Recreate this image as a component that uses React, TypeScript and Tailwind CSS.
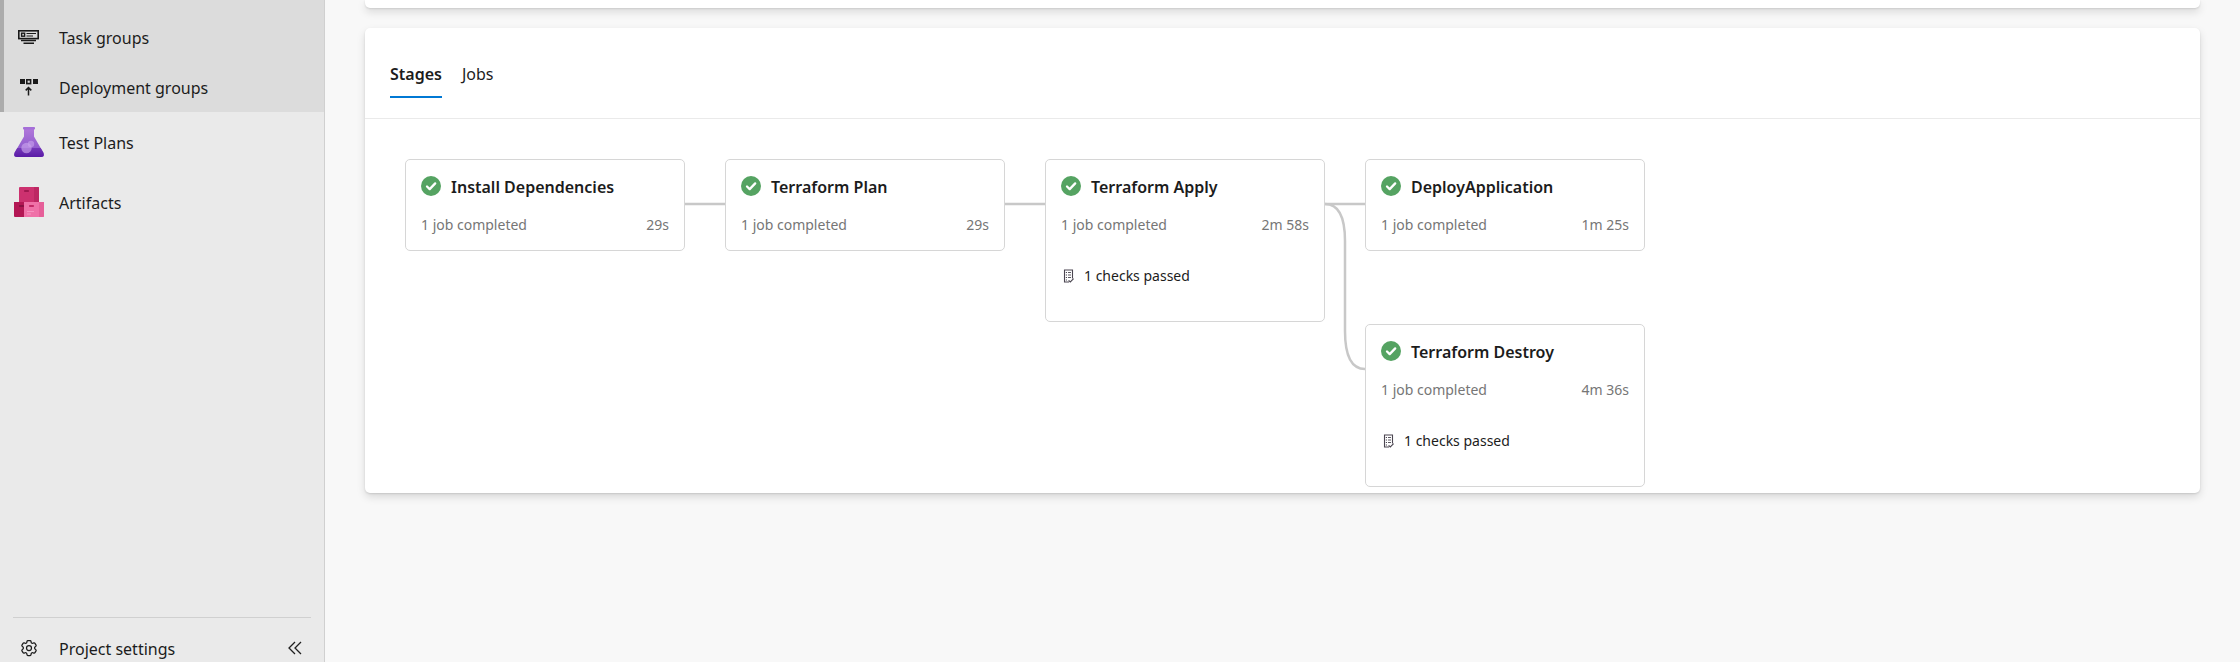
import type { ReactNode } from "react";
import { HiOutlineCog6Tooth } from "react-icons/hi2";

function TaskGroupsIcon() {
  return (
    <svg width="22" height="16" viewBox="0 0 22 16" fill="none" stroke="#1a1a1a">
      <rect x="0.8" y="1.8" width="19.4" height="7.8" strokeWidth="1.6" />
      <rect x="3.6" y="4.2" width="3" height="3" strokeWidth="1.4" />
      <path d="M8.500 4.500H18M8.500 7H15" strokeWidth="1.2" />
      <path d="M3 11.500H18M5.500 14.300H16" strokeWidth="1.5" />
    </svg>
  );
}

function DeploymentGroupsIcon() {
  return (
    <svg width="20" height="18" viewBox="0 0 20 18" fill="none" stroke="#1a1a1a">
      <path d="M1 1h5v5H1zM14 1h5v5h-5z" fill="#1a1a1a" stroke="none" />
      <rect x="7.8" y="1.8" width="3.8" height="3.8" strokeWidth="1.6" />
      <path d="M9.5 17.5V10M6.7 12.4L9.5 9.600l2.800 2.800" strokeWidth="1.5" />
    </svg>
  );
}

function TestPlansIcon() {
  return (
    <svg width="30" height="30" viewBox="0 0 30 30">
      <defs>
        <linearGradient id="flask" x1="0" y1="0" x2="0" y2="1">
          <stop offset="0" stopColor="#b077da" />
          <stop offset="1" stopColor="#8250c8" />
        </linearGradient>
        <linearGradient id="liquid" x1="0" y1="0" x2="0" y2="1">
          <stop offset="0" stopColor="#7437b8" />
          <stop offset="1" stopColor="#5a1ba6" />
        </linearGradient>
      </defs>
      <path d="M10 2h10v7.500L29.300 25.500Q31 30 27 30H3Q-1 30 0.700 25.500L10 9.500z" fill="url(#flask)" />
      <path d="M3.300 21h23.400l2.600 4.500Q31 30 27 30H3Q-1 30 0.700 25.500z" fill="url(#liquid)" />
      <rect x="9" y="0" width="12" height="2.500" rx="0.800" fill="#a56fd8" />
      <circle cx="12.500" cy="21" r="5.200" fill="#c9a3ec" fillOpacity="0.65" />
      <circle cx="17" cy="17" r="3.200" fill="#c9a3ec" fillOpacity="0.6" />
    </svg>
  );
}

function ArtifactsIcon() {
  return (
    <svg width="30" height="30" viewBox="0 0 30 30">
      <path d="M5 1q0-1 1-1h18q1 0 1 1v14H5z" fill="#cc316f" />
      <path d="M20 0h4q1 0 1 1v14h-5z" fill="#bd2763" />
      <rect x="10" y="3" width="5" height="2" rx="0.8" fill="#a01950" />
      <path d="M0 15h10v15H1q-1 0-1-1z" fill="#b31754" />
      <rect x="5" y="18" width="5" height="2" rx="0.8" fill="#8a1043" />
      <path d="M10 15h20v14q0 1-1 1H10z" fill="#ef71a8" />
      <path d="M25 15h5v14q0 1-1 1h-4z" fill="#e65f99" />
      <rect x="15" y="18" width="5" height="2" rx="0.8" fill="#c42a68" />
      <path d="M13 24.500h7M13 27h4" stroke="#f793c0" strokeWidth="1" />
    </svg>
  );
}

function CollapseIcon() {
  return (
    <svg width="14" height="14" viewBox="0 0 14 14" fill="none" stroke="#1f1f1f" strokeWidth="1.3">
      <path d="M7 1L1 7l6 6M13 1L7 7l6 6" />
    </svg>
  );
}

function SuccessIcon() {
  return (
    <svg className="shrink-0" width="20" height="20" viewBox="0 0 20 20" fill="none">
      <circle cx="10" cy="10" r="10" fill="#55a362" />
      <path d="M6 10.500l2.700 2.600 5.500-5.700" stroke="#fff" strokeWidth="2.3" strokeLinecap="round" strokeLinejoin="round" />
    </svg>
  );
}

function ChecksIcon() {
  return (
    <svg className="shrink-0" width="14" height="14" viewBox="0 0 14 14" fill="none" stroke="#4a4550">
      <path d="M10.500 9.500V1H2.500v12h4.500" strokeWidth="1.1" />
      <path d="M6 3.500H9M6 6H9M6 8.500H9" strokeWidth="0.9" />
      <path d="M3.800 3.500h1.200M3.800 6h1.200M3.800 8.500h1.200M3.800 11h1.200" strokeWidth="1.1" />
      <path d="M6.600 11.300l1.700 1.700 3.300-3.300" strokeWidth="1.1" />
    </svg>
  );
}

function NavItem({ icon, label, sub }: { icon: ReactNode; label: string; sub?: boolean }) {
  return (
    <a
      href="#"
      className={
        sub
          ? "flex h-[50px] items-center gap-[15px] pl-[10px]"
          : "flex h-[60px] items-center gap-[15px] pl-[14px]"
      }
    >
      <span className="flex w-[30px] shrink-0 justify-center">{icon}</span>
      <span className="pt-0.5">{label}</span>
    </a>
  );
}

type Stage = { name: string; time: string; checks?: string };

function StageCard({ name, time, checks }: Stage) {
  return (
    <article
      className={
        checks
          ? "h-[163px] w-[280px] shrink-0 rounded-[5px] border border-[#d6d6d6] bg-white px-[15px] pt-3"
          : "h-[92px] w-[280px] shrink-0 rounded-[5px] border border-[#d6d6d6] bg-white px-[15px] pt-3"
      }
    >
      <h3 className="flex h-7 items-center gap-[10px] font-semibold">
        <SuccessIcon />
        <span className="pt-0.5">{name}</span>
      </h3>
      <div className="mt-[15px] flex h-5 items-center justify-between text-sm text-[#767676]">
        <span>1 job completed</span>
        <span>{time}</span>
      </div>
      {checks && (
        <div className="mt-[31px] flex h-5 items-center gap-2 pl-px text-sm">
          <ChecksIcon />
          <span>{checks}</span>
        </div>
      )}
    </article>
  );
}

function Connector() {
  return (
    <svg className="mt-[43px] shrink-0" width="40" height="4" viewBox="0 0 40 4" fill="none" stroke="#c8c8c8" strokeWidth="2.5">
      <path d="M0 2H40" />
    </svg>
  );
}

function BranchConnector() {
  return (
    <svg className="mt-[43px] shrink-0" width="40" height="170" viewBox="0 0 40 170" fill="none" stroke="#c8c8c8" strokeWidth="2.5">
      <path d="M0 2H40" />
      <path d="M0 2C14 2 20 15 20 39V129C20 153 26 167 40 167" />
    </svg>
  );
}

const panelShadow = "shadow-[0_4px_9px_rgba(0,0,0,0.13),0_1px_2px_rgba(0,0,0,0.11)]";

export default function App() {
  return (
    <div className="flex h-screen overflow-hidden bg-[#f8f8f8] font-['Noto_Sans','Open_Sans',sans-serif] text-base text-[#1c1c1c]">
      <aside className="flex w-[325px] shrink-0 flex-col border-r border-[#d0d0d0] bg-[#eaeaea]">
        <nav className="flex flex-col">
          <div className="flex flex-col border-l-4 border-[#acacac] bg-[#dcdcdc] pt-3">
            <NavItem sub icon={<TaskGroupsIcon />} label="Task groups" />
            <NavItem sub icon={<DeploymentGroupsIcon />} label="Deployment groups" />
          </div>
          <NavItem icon={<TestPlansIcon />} label="Test Plans" />
          <NavItem icon={<ArtifactsIcon />} label="Artifacts" />
        </nav>
        <div className="mx-[13px] mt-auto flex items-center justify-between border-t border-[#d0d0d0] pt-4">
          <a href="#" className="flex h-7 items-center gap-[15px] pl-px">
            <span className="flex w-[30px] justify-center">
              <HiOutlineCog6Tooth size={20} />
            </span>
            <span className="pt-0.5">Project settings</span>
          </a>
          <button type="button" aria-label="Collapse navigation" className="mr-[9px]">
            <CollapseIcon />
          </button>
        </div>
      </aside>

      <main className="flex min-w-0 flex-1 flex-col gap-5 px-10">
        <div className={`h-2 shrink-0 rounded-b-[5px] bg-white ${panelShadow}`} />
        <section className={`rounded-[5px] bg-white ${panelShadow}`}>
          <div role="tablist" className="flex h-[91px] items-start gap-5 border-b border-[#eaeaea] px-[25px] pt-8">
            <button type="button" role="tab" aria-selected="true" className="h-[38px] border-b-2 border-[#0078d4] pb-2 leading-7 font-semibold">
              Stages
            </button>
            <button type="button" role="tab" aria-selected="false" className="h-[38px] border-b-2 border-transparent pb-2 leading-7">
              Jobs
            </button>
          </div>
          <div className="flex items-start px-10 pt-10 pb-1.5">
            <StageCard name="Install Dependencies" time="29s" />
            <Connector />
            <StageCard name="Terraform Plan" time="29s" />
            <Connector />
            <StageCard name="Terraform Apply" time="2m 58s" checks="1 checks passed" />
            <BranchConnector />
            <div className="flex flex-col gap-[73px]">
              <StageCard name="DeployApplication" time="1m 25s" />
              <StageCard name="Terraform Destroy" time="4m 36s" checks="1 checks passed" />
            </div>
          </div>
        </section>
      </main>
    </div>
  );
}
